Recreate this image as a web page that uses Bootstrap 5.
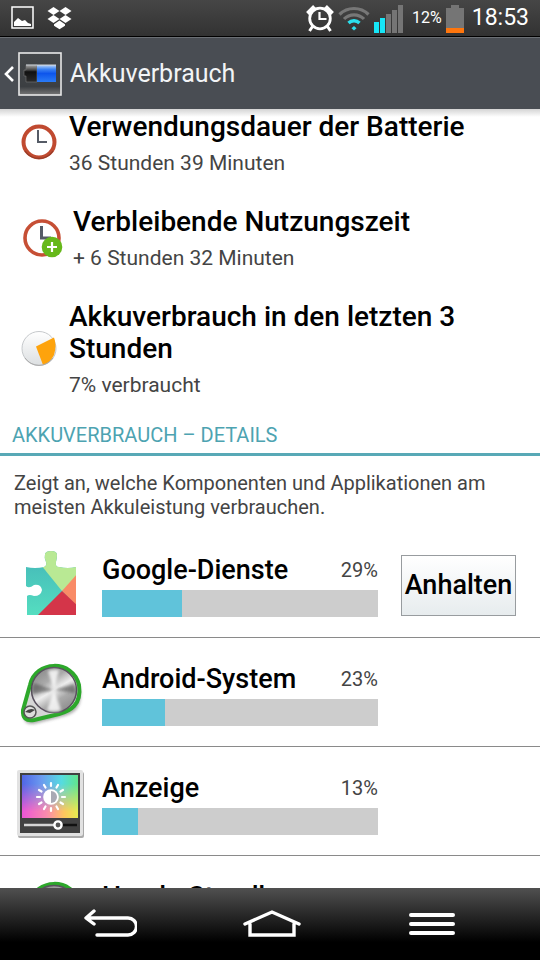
<!DOCTYPE html>
<html lang="de">
<head>
<meta charset="utf-8">
<meta name="viewport" content="width=device-width, initial-scale=1">
<title>Akkuverbrauch</title>
<link href="https://cdn.jsdelivr.net/npm/bootstrap@5.3.0/dist/css/bootstrap.min.css" rel="stylesheet">
<style>
body{font-family:Roboto,"Noto Sans",sans-serif;color:#000;background:#fff}
svg{display:block;flex-shrink:0}
.status-bar{height:37px;padding:0 11px;background:linear-gradient(#464646,#323232);border-bottom:1px solid #000}
.status-pct{font-size:16px}
.status-time{font-size:23px}
.app-bar{height:72px;padding:0 4px;background:#494d53;border-top:1px solid #6b6f74}
.app-title{font-size:25px;line-height:32px;font-weight:400;color:#f2f4f6}
.scroll-area{min-height:0;background:linear-gradient(#d4d4d4,#fff 8px)}
.summary-list{padding:2px 17px 0}
.summary-item{margin-bottom:31px}
.item-title{font-size:28px;line-height:32px;font-weight:500}
.item-sub{font-size:21px;line-height:24px;margin-top:8px;color:#444}
.summary-item:last-child{margin-bottom:26px}
.section-title{font-size:20px;line-height:24px;padding:0 12px 6px;font-weight:400;color:#4da3b1;border-bottom:3px solid #58a9b6}
.section-note{font-size:20px;line-height:24px;padding:0 14px;margin:15px 0 10px;color:#444}
.usage-row{padding:25px 24px 20px 17px;gap:23px;border-bottom:1px solid #8a8a8a}
.usage-icon{margin:-5px -5px -5px 0}
.usage-name{font-size:27px;line-height:32px;font-weight:500}
.usage-pct{font-size:20px;line-height:32px;color:#444}
.progress{height:27px;margin-top:4px;border-radius:0;background:#cdcdcd}
.progress-bar{background:#60c3da}
.action-slot{width:115px}
.btn-stop{height:61px;margin:-1px 0;padding:0;font-size:27px;font-weight:500;color:#000;border:1px solid #989c9f;border-radius:0;background:linear-gradient(#fff,#e7ecee)}
.nav-keys{height:72px;padding:0 30px;background:linear-gradient(#505050,#000 75%)}
.nav-keys .btn{color:#fff;border:0}
</style>
<script src="https://cdn.jsdelivr.net/npm/bootstrap@5.3.0/dist/js/bootstrap.bundle.min.js"></script>
</head>
<body>
<div class="vh-100 d-flex flex-column overflow-hidden">
<div class="status-bar d-flex align-items-center text-white flex-shrink-0">
  <svg width="24" height="24" viewBox="0 0 24 24" aria-hidden="true"><rect x="1" y="1" width="21" height="21" fill="none" stroke="#fff" stroke-width="1.5"/><path d="M3 20v-4l4-4 4 3 3-1 3 3 3 1v2z" fill="#fff"/></svg>
  <svg class="ms-2 me-auto" width="30" height="24" viewBox="-1 0 30 24" fill="#fff" aria-hidden="true"><path d="M9.500 1l6 4-6 4-6-4zM21.500 1l6 4-6 4-6-4zM9.500 9l6 4-6 4-6-4zM21.500 9l6 4-6 4-6-4zM15.500 14.500l5.500 3.700v1.500l-5.500 3.500-5.500-3.500v-1.500z"/></svg>
  <svg width="28" height="28" viewBox="0 0 28 28" aria-hidden="true"><g fill="none" stroke="#fff"><circle cx="14" cy="14.500" r="10.300" stroke-width="2.800"/><path d="M13.500 8v7h7" stroke-width="2.200"/><path d="M1.500 9.500l7-7M26.500 9.500l-7-7" stroke-width="4"/><path d="M6.500 22.500L3.500 27M21.500 22.500l3 4.500" stroke-width="3"/></g></svg>
  <svg class="ms-1" width="32" height="26" viewBox="0 0 32 26" fill="none" aria-hidden="true"><path d="M1.500 9.500a20.500 20.500 0 0 1 29 0M6 14a14 14 0 0 1 20 0" stroke="#777" stroke-width="3.200"/><path d="M10.500 18a8 8 0 0 1 11 0" stroke="#2be0ee" stroke-width="3.400"/><path d="M16 21l2.500 2.200L16 25.500l-2.500-2.300z" fill="#2be0ee"/></svg>
  <svg class="ms-1" width="30" height="29" viewBox="0 0 30 29" aria-hidden="true"><path d="M0 18h5v11H0zM6 14h5v15H6z" fill="#16e6f7"/><path d="M12 10h5v19h-5zM18 6h5v23h-5zM24 1h5v28h-5z" fill="#757575"/></svg>
  <span class="status-pct ms-2">12%</span>
  <svg class="ms-1" width="18" height="29" viewBox="0 0 18 29" aria-hidden="true"><path d="M5 1h8v3h5v20H0V4h5z" fill="#757575"/><path d="M0 24h18v5H0z" fill="#ff760d"/></svg>
  <span class="status-time ms-2">18:53</span>
</div>
<header class="app-bar d-flex align-items-center flex-shrink-0">
  <a href="#" class="d-flex align-items-center text-white text-decoration-none" aria-label="Zurück">
    <svg width="14" height="18" viewBox="0 0 14 18" fill="none" stroke="#fff" stroke-width="2.600" aria-hidden="true"><path d="M9 2L2 9l7 7"/></svg>
    <svg width="44" height="44" viewBox="0 0 44 44" aria-hidden="true"><defs><linearGradient id="tile" x2="0" y2="1"><stop stop-color="#44474a"/><stop offset=".8" stop-color="#3c3f42"/><stop offset="1" stop-color="#777"/></linearGradient><linearGradient id="cell" x2="0" y2="1"><stop stop-color="#b9d4f8"/><stop offset=".25" stop-color="#3d83f2"/><stop offset=".5" stop-color="#0d55ec"/><stop offset="1" stop-color="#2b7bf5"/></linearGradient><linearGradient id="empty" x2="0" y2="1"><stop stop-color="#aaa"/><stop offset=".3" stop-color="#444"/><stop offset=".4" stop-color="#111"/><stop offset="1" stop-color="#2b2b2b"/></linearGradient></defs><rect x="1" y="1" width="42" height="42" fill="url(#tile)" stroke="#e8e8e8" stroke-width="1.600"/><path d="M6 18h2v-5h11v17H8v-6H6z" fill="url(#empty)" stroke="#777" stroke-width=".6"/><path d="M19 13h19v17H19z" fill="url(#cell)"/><path d="M8 13h30" stroke="#cfd4da"/></svg>
  </a>
  <h1 class="app-title mb-0 ms-2">Akkuverbrauch</h1>
</header>

<main class="scroll-area flex-fill overflow-hidden">
  <section class="summary-list">
    <div class="summary-item d-flex align-items-center gap-2">
      <svg width="44" height="44" viewBox="0 0 44 44" fill="none" aria-hidden="true"><circle cx="22" cy="21" r="15.500" fill="#fff" stroke="#c04a30" stroke-width="4"/><path d="M8 30a17 17 0 0 0 28 0" stroke="#933c29" stroke-width="1.200"/><path d="M21 9v12h9" stroke="#555b66" stroke-width="2"/></svg>
      <div><div class="item-title">Verwendungsdauer der Batterie</div><div class="item-sub">36 Stunden 39 Minuten</div></div>
    </div>
    <div class="summary-item d-flex align-items-center gap-2">
      <svg width="48" height="44" viewBox="0 0 48 44" fill="none" aria-hidden="true"><circle cx="25" cy="22" r="17" fill="#fff" stroke="#c64f35" stroke-width="3.600"/><path d="M24.500 10v12H34" stroke="#555b66" stroke-width="3"/><circle cx="35" cy="31" r="10.300" fill="#66b81a"/><path d="M35 26v10M30 31h10" stroke="#fff" stroke-width="2.200"/></svg>
      <div><div class="item-title">Verbleibende Nutzungszeit</div><div class="item-sub">+ 6 Stunden 32 Minuten</div></div>
    </div>
    <div class="summary-item d-flex align-items-center gap-2">
      <svg width="44" height="44" viewBox="0 0 44 44" aria-hidden="true"><defs><linearGradient id="disc" x2="0" y2="1"><stop stop-color="#fff"/><stop offset="1" stop-color="#dcdfe1"/></linearGradient></defs><circle cx="22" cy="21.500" r="17" fill="url(#disc)" stroke="#c6c9cc"/><path d="M19 19.500L37 10.500Q40 18 37 28Q33 36 26 38z" fill="#fea30c"/><path d="M8 31a17 17 0 0 0 28 0" fill="none" stroke="#aaa"/></svg>
      <div><div class="item-title">Akkuverbrauch in den letzten 3 Stunden</div><div class="item-sub">7% verbraucht</div></div>
    </div>
  </section>

  <h2 class="section-title mb-0">AKKUVERBRAUCH – DETAILS</h2>
  <p class="section-note">Zeigt an, welche Komponenten und Applikationen am meisten Akkuleistung verbrauchen.</p>

  <div class="usage-row d-flex align-items-center">
    <svg class="usage-icon" width="67" height="72" viewBox="0 0 67 72" aria-hidden="true"><defs><clipPath id="puzzle"><path d="M9 17Q18 19 27 17Q30 16 29 12Q27 8 28 4Q29 1 34 1Q40 1 40 5Q40 8 39 12Q38 17 42 17Q51 19 59 17V65H10V46Q12 44 17 46Q24 46 25 40Q24 34 17 35Q12 39 9 36z"/></clipPath><linearGradient id="teal" x2="0" y2="1"><stop stop-color="#43b5b8"/><stop offset="1" stop-color="#55dec0"/></linearGradient></defs><g clip-path="url(#puzzle)"><path d="M0 0h67v66H0z" fill="url(#teal)"/><path d="M24 15L26 0h41v27L45 41z" fill="#b9e994"/><path d="M45 41l16-18v34z" fill="#f98b67"/><path d="M45 41L20 66h41V56z" fill="#d43549"/></g></svg>
    <div class="flex-fill">
      <div class="d-flex justify-content-between"><span class="usage-name">Google-Dienste</span><span class="usage-pct">29%</span></div>
      <div class="progress" role="progressbar" aria-label="Google-Dienste" aria-valuenow="29" aria-valuemin="0" aria-valuemax="100"><div class="progress-bar" style="width:29%"></div></div>
    </div>
    <div class="action-slot flex-shrink-0"><button type="button" class="btn btn-stop w-100">Anhalten</button></div>
  </div>

  <div class="usage-row d-flex align-items-center">
    <svg class="usage-icon" width="67" height="64" viewBox="0 0 67 64" aria-hidden="true"><defs><linearGradient id="steel" x1=".2" x2=".8" y2="1"><stop stop-color="#888"/><stop offset=".3" stop-color="#aaa"/><stop offset=".5" stop-color="#eee"/><stop offset=".7" stop-color="#aaa"/><stop offset="1" stop-color="#888"/></linearGradient><filter id="soft"><feGaussianBlur stdDeviation="1.500"/></filter></defs><path d="M13 23C19-2 56-3 62 23C66 45 53 50 43 52L16 59Q4 60 6 48z" fill="#777" opacity=".6" transform="translate(1 2)" filter="url(#soft)"/><path d="M13 22C18-3 56-4 62 22C65 42 53 48 42 51L17 57Q5 59 6 47z" fill="#d6d6d6" stroke="#2da82b" stroke-width="4"/><circle cx="37" cy="27" r="22.500" fill="url(#steel)" stroke="#59505e" stroke-width="1.500"/><g filter="url(#soft)"><path d="M37 27L16 31Q14 25 17 20zM37 27l20-6q2 5 1 9z" fill="#444" opacity=".55"/><path d="M37 27L30 47q7 3 14 0zM37 27L31 8q6-2 11-1z" fill="#fff" opacity=".8"/></g><circle cx="13" cy="49" r="6" fill="#ddd" stroke="#555" stroke-width="1.500"/><path d="M8 49q5-5 10-2l-5 3z" fill="#444"/></svg>
    <div class="flex-fill">
      <div class="d-flex justify-content-between"><span class="usage-name">Android-System</span><span class="usage-pct">23%</span></div>
      <div class="progress" role="progressbar" aria-label="Android-System" aria-valuenow="23" aria-valuemin="0" aria-valuemax="100"><div class="progress-bar" style="width:23%"></div></div>
    </div>
    <div class="action-slot flex-shrink-0"></div>
  </div>

  <div class="usage-row d-flex align-items-center">
    <svg class="usage-icon" width="67" height="68" viewBox="0 0 67 68" aria-hidden="true"><defs><linearGradient id="hue"><stop stop-color="#5166e8"/><stop offset=".35" stop-color="#6b9bef"/><stop offset=".7" stop-color="#56dbe1"/><stop offset="1" stop-color="#61e78c"/></linearGradient><linearGradient id="warm"><stop stop-color="#ed55d7"/><stop offset=".45" stop-color="#fb8cab"/><stop offset=".75" stop-color="#ffc65e"/><stop offset="1" stop-color="#e6ed50"/></linearGradient><linearGradient id="fade" x2="0" y2="1"><stop offset=".2" stop-color="#000"/><stop offset=".85" stop-color="#fff"/></linearGradient><mask id="low"><path d="M4 5h58v43H4z" fill="url(#fade)"/></mask></defs><rect x="1" y="2" width="66" height="66" rx="2" fill="#aaa"/><rect x="0" y="0" width="66" height="66" rx="2" fill="#e2e2e2"/><path d="M3 3h60v60H3z" fill="#414141"/><path d="M5 5h56v43H5z" fill="url(#hue)"/><path d="M5 5h56v43H5z" fill="url(#warm)" mask="url(#low)"/><path d="M34 16v-3M34 38v3M23 27h-3M45 27h3M28.500 17.500L27 15M39.500 17.500L41 15M28.500 36.500L27 39M39.500 36.500L41 39M24.500 21.500L22 20M43.500 21.500L46 20M24.500 32.500L22 34M43.500 32.500L46 34" stroke="#fff" stroke-width="2.200" stroke-linecap="round"/><circle cx="34" cy="27" r="7.800" fill="#fff"/><path d="M34 21a6 6 0 0 1 0 12z" fill="#a9a9b4"/><path d="M7 55h32" stroke="#d5d5d5" stroke-width="2.500"/><path d="M44 55h16" stroke="#111" stroke-width="2.500"/><circle cx="41" cy="55" r="3.600" fill="#555" stroke="#fff" stroke-width="2.400"/></svg>
    <div class="flex-fill">
      <div class="d-flex justify-content-between"><span class="usage-name">Anzeige</span><span class="usage-pct">13%</span></div>
      <div class="progress" role="progressbar" aria-label="Anzeige" aria-valuenow="13" aria-valuemin="0" aria-valuemax="100"><div class="progress-bar" style="width:13%"></div></div>
    </div>
    <div class="action-slot flex-shrink-0"></div>
  </div>

  <div class="usage-row d-flex align-items-center">
    <svg class="usage-icon" width="67" height="64" viewBox="0 0 67 64" aria-hidden="true"><path d="M13 22C18-3 56-4 62 22C65 42 53 48 42 51L17 57Q5 59 6 47z" fill="#d6d6d6" stroke="#2da82b" stroke-width="4"/><circle cx="37" cy="27" r="22.500" fill="url(#steel)" stroke="#59505e" stroke-width="1.500"/></svg>
    <div class="flex-fill">
      <div class="usage-name">Handy-Standby</div>
      <div class="progress"></div>
    </div>
    <div class="action-slot flex-shrink-0"></div>
  </div>
</main>

<nav class="nav-keys d-flex justify-content-around align-items-center flex-shrink-0" aria-label="Navigation">
  <button type="button" class="btn p-0" aria-label="Zurück"><svg width="54" height="30" viewBox="0 0 54 30" fill="none" stroke="currentColor" stroke-width="3.400" stroke-linecap="round"><path d="M11 2L3 9l8 6M4 9h41a8 8 0 0 1 0 17H14" stroke-linejoin="round"/></svg></button>
  <button type="button" class="btn p-0" aria-label="Startseite"><svg width="58" height="30" viewBox="0 0 58 30" fill="none" stroke="currentColor" stroke-width="3.400" stroke-linecap="round"><path d="M2 15L29 3l27 12M7 15v11h44V15"/></svg></button>
  <button type="button" class="btn p-0" aria-label="Menü"><svg width="50" height="30" viewBox="0 0 50 30" stroke="currentColor" stroke-width="4" stroke-linecap="round"><path d="M4 6h42M4 15h42M4 24h42"/></svg></button>
</nav>
</div>
</body>
</html>
